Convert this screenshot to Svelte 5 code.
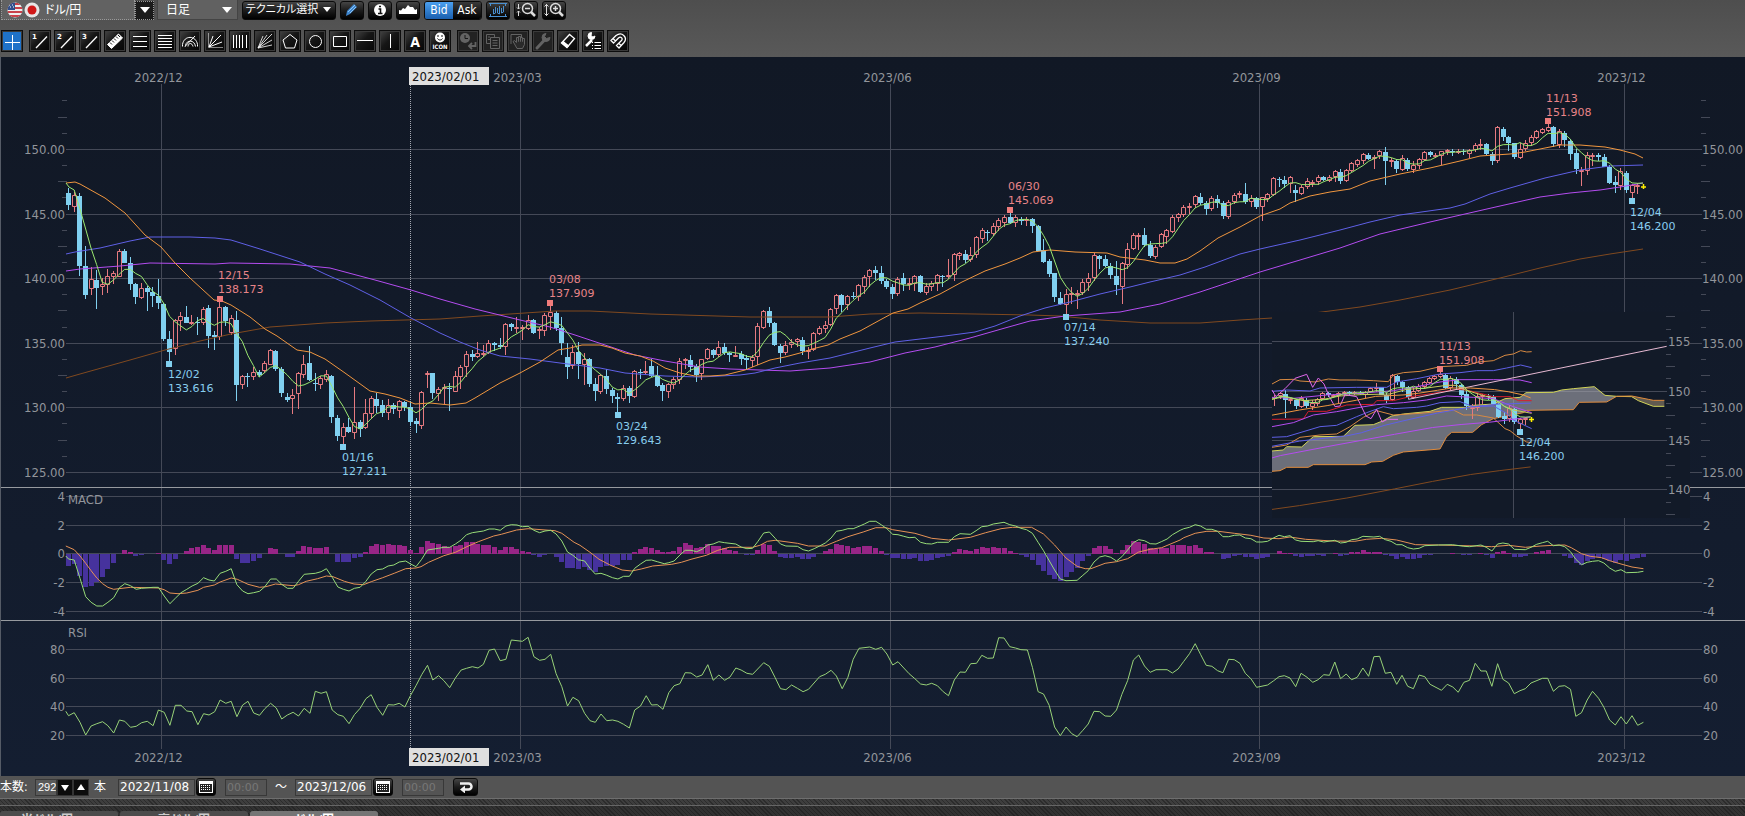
<script>
  // Candle rows: direction, body top, body bottom, high, low. Units are a third of
  // a chart pixel below the row block's base line.
  const blocks = [
    { base: 60, rows: `b 400 436 385 450|r 405 440 395 455|b 407 617 400 648|b 618 704 557 716|r 658 688 622 704|b 660 683 630 746|r 672 682 655 705|r 648 676 626 700|r 640 650 632 672|r 573 650 567 652|b 574 608 568 610|b 608 671 590 690|b 671 710 668 731|r 685 713 670 718|b 685 697 677 753|b 696 707 680 740|b 708 728 656 746|b 733 836 728 842|b 837 876 812 910|r 780 868 776 885|r 768 783 755 812|b 772 788 738 790|r 786 792 765 795|b 786 788 772 826|r 747 790 740 795|b 745 828 735 864|b 825 830 812 870|r 742 832 720 840|b 740 782 738 797|r 775 818 765 825|b 779 976 753 1022|r 948 976 944 986|b 947 952 938 980|r 935 950 922 960|b 935 946 930 950|r 908 934 903 938|r 870 914 867 916|b 873 926 870 932|b 926 1000 922 1010|b 1011 1019 1000 1025|r 1004 1018 987 1063|r 940 1003 935 1047|r 911 945 885 955|b 910 960 857 964|b 968 971 940 992|r 955 974 948 988|r 943 960 930 966|b 948 1070 945 1090|b 1074 1128 1065 1142|r 1100 1130 1088 1158|b 1102 1115 1075 1120|r 1085 1118 980 1138|b 1086 1106 1080 1132|r 1060 1105 1018 1108|r 1015 1063 1008 1078|b 1018 1037 1000 1060|b 1036 1060 1020 1070|r 1034 1060 1018 1080|b 1034 1048 1030 1062|r 1024 1054 1020 1075|b 1025 1042 1022 1052|b 1042 1085 1022 1097|b 1084 1093 1075 1118|r 996 1097 994 1108|r 940 946 932 985` },
    { base: 230, rows: `b 430 490 428 508|r 478 492 470 512|r 472 478 462 522|b 474 478 460 542|r 438 486 422 486|r 412 440 404 476|r 373 412 362 440|b 372 380 360 392|r 370 380 335 384|r 368 374 345 382|r 338 368 330 372|b 338 345 335 362|b 345 350 325 358|r 281 352 278 376|b 282 290 278 304|r 290 294 262 308|r 290 294 284 330|r 270 296 256 300|b 270 308 268 312|r 298 301 290 328|r 255 304 250 318|r 246 260 225 300|b 248 294 244 303|b 294 338 262 374|b 381 410 338 446|r 367 408 344 416|b 366 402 336 448|r 388 404 370 466|b 388 463 385 472|b 462 482 445 512|r 436 487 432 492|b 438 476 416 493|b 479 498 474 520|b 500 506 490 548|r 474 508 466 514|b 474 498 468 518|r 422 500 420 504|b 427 429 418 446|r 424 430 392 434|b 408 438 388 440|b 438 468 408 472|b 466 482 460 514|r 462 485 458 504|r 446 466 440 476|r 392 450 384 462|r 388 394 384 418|b 391 412 374 426|b 408 434 402 456|r 388 432 386 450|r 358 386 354 390|b 360 376 356 384|r 350 376 334 382|b 350 370 338 376|b 368 374 366 396|r 374 377 348 382|b 372 388 362 404|b 384 389 374 416|r 380 392 374 412|r 288 380 280 404|r 244 294 240 296|b 243 278 231 290|b 278 346 276 348|b 348 368 342 398|r 346 370 334 376|r 336 346 326 354|r 328 336 324 350|b 330 364 320 374|r 360 366 350 388|r 310 360 306 362|r 295 312 288 316|r 284 298 274 308|r 238 286 234 288|r 195 238 193 252|b 195 225 193 246|r 199 226 195 240|b 198 201 186 206|r 166 202 162 214` },
    { base: 130, rows: `r 442 470 436 493|r 420 442 416 470|b 421 430 408 450|b 430 454 408 462|b 452 472 446 478|b 471 491 462 506|r 446 492 440 498|b 445 462 430 484|r 458 466 444 480|r 437 462 434 484|b 439 487 436 490|r 468 488 460 494|r 460 470 452 484|r 436 462 432 484|b 438 442 434 472|r 434 438 386 446|r 372 436 368 452|r 370 378 366 390|b 371 390 360 400|r 374 390 352 396|r 322 376 318 384|r 300 326 294 340|b 307 310 300 332|r 287 312 280 318|r 270 290 264 302|r 260 280 254 290|b 262 278 248 282|r 262 280 256 292|b 266 272 262 284|r 268 274 262 288|b 267 288 264 308|b 287 362 284 364|b 360 396 328 398|b 392 432 388 440|b 430 502 428 516|b 504 522 486 526|r 492 524 478 560|r 490 496 472 522|r 490 494 480 536|r 456 490 446 496|r 443 460 430 484|r 374 444 368 454|b 378 388 374 416|b 388 408 376 412|b 408 436 400 448|b 437 464 394 494|r 400 470 396 522|r 356 406 340 418|r 316 358 310 360|r 314 320 308 360|b 316 346 293 350|b 345 378 332 384|r 350 380 346 386|r 313 350 310 354|r 300 320 296 342|r 260 306 256 308|r 253 263 248 276|r 230 254 226 262|r 228 231 220 252|r 199 226 196 234|b 202 218 190 224|b 220 236 212 256|r 204 236 198 244|b 206 218 196 234|b 218 258 214 268|r 216 262 210 266|r 195 216 190 222|r 190 196 184 204|b 192 216 158 222|r 204 216 194 232|b 204 230 200 236` },
    { base: 60, rows: `r 412 442 410 484|r 403 418 400 426|r 355 406 352 408|b 357 360 352 382|b 360 373 348 384|r 352 372 348 400|b 390 400 374 426|r 382 402 374 406|r 364 382 354 386|r 366 369 360 382|r 352 366 346 376|b 351 360 348 362|r 350 362 346 366|r 332 350 330 366|b 336 362 326 372|r 330 362 326 366|r 310 332 306 336|r 300 316 296 320|r 281 302 278 312|b 284 297 280 300|r 290 293 284 326|r 273 288 270 298|b 277 304 261 374|r 300 306 294 320|b 304 326 298 338|r 294 330 286 334|b 301 326 294 332|r 316 330 304 340|r 297 318 294 328|r 275 300 272 304|b 276 284 272 290|r 284 290 278 294|r 273 288 272 316|r 270 276 266 286|b 272 275 268 288|r 272 278 266 282|b 273 276 266 284|r 270 282 266 294|r 255 270 250 276|r 252 258 236 270|b 252 282 250 284|b 283 304 276 314|r 202 304 198 308|b 206 230 202 242|b 232 250 228 272|b 250 290 248 298|r 266 295 250 298|r 248 266 240 272|r 230 250 226 258|r 214 234 210 238|r 208 218 204 222|r 200 212 185 216|b 202 253 198 260|r 214 256 208 264|b 218 240 212 262|b 244 282 238 300|b 280 328 268 342|r 330 334 320 378|r 286 332 276 346|r 284 288 278 318|b 285 290 280 304|b 290 320 282 322|b 320 368 316 372|b 366 376 348 398|r 334 378 324 390|b 338 390 332 398|r 376 398 372 422|r 374 378 370 402` }
  ];
  const candles = blocks.flatMap(({ base, rows }) =>
    rows.split('|').map((row) => {
      const [dir, ...v] = row.split(' ');
      const [top, bottom, high, low] = v.map((n) => base + Number(n) / 3);
      return { up: dir === 'r', top, bottom, high, low, close: dir === 'r' ? top : bottom };
    })
  );
  const barX = (i) => 68.6 + i * 5.604;
  const insetX = (x) => 1440.3 + (x - 1548.1) * 0.9517;
  const insetY = (y) => 391.3 + (y - 149.3) * 0.7587;
  const same = (n) => n;

  function candlePaths(from, fx, fy) {
    let upBody = '', upWick = '', down = '';
    candles.forEach((c, i) => {
      if (i < from) return;
      const x = Math.floor(fx(barX(i)));
      const [t, b, h, l] = [c.top, c.bottom, c.high, c.low].map((n) => Math.round(fy(n)));
      const height = Math.max(1, b - t);
      if (c.up) {
        upBody += `M${x - 1.5} ${t + 0.5}h4v${Math.max(1, height - 1)}h-4z`;
        upWick += `M${x + 0.5} ${h}V${t}M${x + 0.5} ${b}V${Math.max(b, l)}`;
      } else {
        down += `M${x - 2} ${t}h5v${height}h-5zM${x} ${h}h1V${l}h-1z`;
      }
    });
    return { upBody, upWick, down };
  }
  const mainCandles = candlePaths(0, same, same);
  const insetCandles = candlePaths(233, insetX, insetY);

  const parse = (s) => s.trim().split(' ').map((p) => p.split(',').map(Number));
  const points = (list, fx = same, fy = same) => list.map(([x, y]) => `${fx(x).toFixed(1)},${fy(y).toFixed(1)}`).join(' ');

  const shortAvg = [[66, 183], [69, 187], [74.2, 190], [80, 209], [85.4, 228]];
  candles.forEach((c, i) => {
    if (i > 3) shortAvg.push([barX(i), candles.slice(i - 4, i + 1).reduce((s, k) => s + k.close, 0) / 5]);
  });
  shortAvg.push([1643, 183]);

  const averages = [
    { color: '#80491f', pts: parse('66,378 80,374 130,360 165,350 200,341 231,334 270,327 325,323 370,321 440,319 480,316 510,314 555,311 590,311 650,314 750,317 830,317 870,314 920,313 1030,315 1060,316 1100,320 1150,323 1200,323 1240,320 1272,318 1322,312 1360,307 1400,300 1450,290 1500,278 1540,268 1580,259 1610,254 1643,249') },
    { color: '#b44cf0', pts: parse('66,271 80,269 120,266 150,263 215,264 230,263 290,264 330,268 375,280 411,290 440,299 475,309 520,320 550,327 575,335 605,345 635,355 665,361 700,367 730,369 790,371 830,368 870,362 905,353 935,347 970,338 1005,328 1030,321 1065,316 1120,312 1160,304 1200,292 1260,272 1320,254 1340,248 1380,234 1430,222 1500,206 1540,197 1570,193 1600,190 1620,187 1643,183') },
    { color: '#5f60e6', pts: parse('66,254 75,252 100,248 130,241 150,237 190,237 215,238 231,240 260,249 300,262 325,274 350,285 380,300 411,318 440,333 460,342 480,350 500,356 530,359 560,363 600,368 625,373 665,376 700,377 740,375 755,373 775,368 800,363 830,358 870,348 895,342 920,339 945,336 975,332 995,326 1020,316 1045,308 1070,302 1100,294 1130,287 1150,282 1180,275 1205,267 1240,254 1260,249 1300,240 1340,230 1370,222 1400,215 1450,208 1465,204 1490,194 1510,188 1545,178 1580,170 1610,166 1643,165') },
    { color: '#f0963f', pts: parse('66,183 75,182 80,184 105,198 125,213 145,235 161,247 175,263 190,278 214,300 222,301 231,305 250,317 265,329 277,336 297,350 310,352 325,359 345,373 370,391 385,394 400,398 415,404 430,403 450,405 466,403 475,398 500,383 520,373 540,362 558,350 570,348 582,345 600,345 612,348 625,353 640,356 653,361 665,368 680,373 695,376 710,376 725,375 745,370 755,366 770,360 785,357 800,353 812,349 828,345 840,339 860,331 880,320 893,313 908,309 920,303 940,294 962,282 985,271 1005,264 1020,258 1033,252 1050,250 1075,252 1107,253 1120,257 1145,260 1160,263 1175,263 1187,259 1200,251 1218,238 1240,227 1260,216 1280,209 1290,203 1310,196 1330,192 1350,189 1370,181 1400,174 1430,168 1460,161 1480,156 1510,154 1525,152 1545,148 1560,145 1580,145 1605,147 1620,150 1635,154 1643,158') },
    { color: '#9be870', pts: shortAvg }
  ];

  // Oscillator traces come in three stretches, each with its own origin and step.
  const stretch = (parts) => {
    const origins = [[0, 2.613], [580, 2.613], [1150, 2.635]];
    return parts.flatMap((s, k) => parse(s).map(([x, y]) => [origins[k][0] + x / origins[k][1], 480 + y / 3]));
  };
  const macd = stretch([
    '172,228 179,237 194,240 209,295 224,350 238,367 253,378 268,378 282,367 297,353 312,323 326,311 341,317 356,328 370,325 400,322 414,322 429,348 444,371 458,355 473,338 488,328 502,318 517,310 532,293 546,300 560,303 575,280 590,274 604,266 619,314 634,333 648,341 663,338 678,334 692,320 707,297 722,297 736,313 751,325 766,325 780,304 795,283 824,280 839,275 853,266 868,292 883,321 897,328 912,333 926,325 941,322 956,304 970,282 985,269 1000,267 1014,258 1029,255 1043,246 1060,243 1073,252 1087,260 1102,238 1117,210 1146,205 1160,202 1175,202 1190,192 1205,180 1219,164 1234,158 1263,153 1278,147 1292,147 1307,151 1322,138 1336,134 1351,135 1365,140 1380,139 1395,151 1410,158 1424,153 1439,151 1453,162 1468,183 1483,216 1497,226 1512,240',
    '0,240 12,243 26,265 40,282 55,280 70,286 85,293 99,297 114,289 129,289 143,265 158,252 173,241 187,240 202,245 220,251 232,248 246,243 261,225 275,211 290,211 305,215 319,208 334,195 348,192 363,185 378,188 407,192 421,201 436,206 451,205 465,184 480,159 495,156 510,175 524,192 538,198 568,199 583,209 597,213 612,206 626,198 641,189 656,174 670,154 685,151 700,146 714,146 729,139 743,132 757,124 773,124 788,135 802,146 817,163 831,164 846,169 860,173 875,172 890,187 905,191 919,192 934,187 963,187 978,170 993,161 1020,163 1035,152 1050,140 1065,138 1080,132 1108,127 1123,134 1138,138 1152,145 1167,149 1182,160 1197,187 1211,212 1225,240 1240,270 1255,297 1270,302 1299,301 1314,286 1328,272 1343,246 1358,231 1372,227 1387,232 1402,243 1416,230 1431,210 1446,188 1460,179 1475,182 1490,191 1505,192 1519,185 1534,177 1548,164 1568,151',
    '89,146 104,142 119,134 133,138 148,148 163,148 178,154 192,170 207,170 222,166 237,165 251,174 266,176 281,186 295,186 310,184 325,174 340,166 354,170 369,167 384,180 398,184 430,185 443,182 458,186 487,181 502,189 517,187 531,179 546,177 561,169 590,171 605,169 620,179 635,184 650,194 664,194 679,203 694,207 709,205 724,197 760,195 797,194 827,199 842,200 872,195 886,202 901,213 916,192 930,189 945,192 960,208 989,209 1004,202 1019,193 1034,188 1048,184 1063,197 1078,195 1093,200 1108,215 1122,238 1137,254 1152,247 1166,244 1182,242 1196,249 1211,264 1226,274 1241,269 1255,278 1285,277 1300,274'
  ]);
  const signal = stretch([
    '172,198 194,209 209,228 224,250 238,272 253,294 268,311 282,322 297,328 341,322 414,324 429,329 444,339 465,341 488,339 517,331 532,322 560,315 575,306 604,294 620,298 648,313 678,322 695,320 720,312 766,317 780,314 800,304 830,296 853,288 870,290 900,304 925,312 950,314 970,305 1000,293 1030,280 1060,266 1087,264 1100,260 1120,247 1160,227 1190,217 1220,200 1250,185 1290,168 1310,163 1350,150 1380,146 1450,152 1468,160 1500,187',
    '0,196 26,217 50,238 80,256 110,270 135,273 160,267 190,258 240,253 265,247 290,238 330,226 360,211 390,202 451,202 470,196 490,184 510,181 568,190 597,198 640,198 670,184 700,170 740,156 773,143 800,143 817,149 875,160 919,175 963,180 1020,172 1060,158 1100,146 1130,142 1180,142 1211,162 1240,195 1270,234 1299,259 1320,266 1335,266 1372,250 1402,245 1431,236 1460,216 1490,208 1520,203 1568,180',
    '89,173 119,160 150,154 180,154 222,160 266,166 300,174 340,176 369,171 410,178 480,183 540,184 570,178 610,175 650,180 700,194 760,195 860,198 900,200 945,196 989,202 1030,198 1063,196 1093,195 1110,203 1137,221 1160,229 1190,233 1211,242 1241,252 1270,261 1300,266'
  ]);
  const rsi = stretch([
    '172,694 179,707 194,698 209,727 224,765 238,738 253,731 268,725 282,737 297,759 312,720 326,724 341,742 356,739 370,728 385,724 400,737 414,690 429,697 444,736 458,676 473,676 488,693 502,695 517,734 532,701 546,705 561,695 575,660 590,670 604,664 619,710 634,675 648,664 663,699 678,706 692,686 707,670 722,684 736,717 751,705 766,697 780,708 795,685 810,700 824,634 839,640 853,635 868,690 883,704 897,709 912,731 926,704 941,685 956,656 970,644 985,682 1000,706 1014,674 1029,675 1043,670 1058,681 1073,646 1087,617 1102,584 1117,556 1131,600 1146,587 1160,602 1175,623 1190,594 1205,570 1219,565 1234,560 1249,564 1263,553 1278,511 1292,507 1307,542 1322,538 1336,480 1365,484 1380,472 1395,530 1410,541 1424,538 1439,523 1453,581 1468,620 1483,678 1497,652 1512,662',
    '0,671 12,700 26,722 40,727 55,702 70,722 85,720 99,724 114,733 129,744 143,690 158,678 173,647 187,675 202,674 217,688 232,638 246,617 261,611 275,578 290,579 305,591 319,585 334,554 348,601 363,585 378,601 392,591 407,564 421,570 436,580 451,583 480,548 495,559 510,593 524,626 538,629 553,615 568,625 583,635 597,628 626,590 641,583 656,571 670,588 685,626 700,592 714,538 729,505 757,501 773,508 788,502 802,522 817,555 831,545 846,564 860,581 875,596 890,612 905,615 919,610 934,617 949,635 963,647 978,600 993,576 1007,577 1021,551 1036,550 1050,526 1065,535 1080,534 1094,473 1108,474 1123,500 1138,504 1152,509 1169,510 1182,562 1197,635 1211,642 1226,676 1240,741 1255,767 1270,741 1285,761 1299,770 1314,751 1328,732 1343,694 1358,695 1372,708 1387,709 1402,690 1416,643 1431,602 1446,540 1460,525 1475,558 1490,577 1505,569 1534,569 1548,579',
    '74,567 89,544 104,521 119,491 133,523 148,556 163,559 178,572 192,578 207,538 222,539 237,550 251,580 266,596 281,622 310,615 325,603 340,590 354,587 369,594 384,620 398,580 414,592 429,607 443,599 458,584 473,586 487,546 502,596 517,582 531,599 546,592 561,564 576,589 590,530 605,529 620,580 635,577 650,613 664,586 679,619 694,626 709,585 724,590 738,613 768,631 783,613 798,621 812,637 827,607 842,601 857,550 872,573 886,573 901,619 916,551 930,598 945,609 960,641 975,632 989,626 1004,609 1034,595 1048,595 1063,634 1078,619 1093,617 1108,628 1122,709 1137,698 1152,660 1166,634 1182,655 1196,682 1211,720 1226,735 1241,710 1255,732 1270,707 1285,736 1300,727'
  ]);
  const at = (line, x) => {
    const k = line.findIndex((p) => p[0] >= x);
    if (k < 1) return line[k < 0 ? line.length - 1 : 0][1];
    const [a, b] = [line[k - 1], line[k]];
    return a[1] + ((b[1] - a[1]) * (x - a[0])) / (b[0] - a[0] || 1);
  };
  const histogram = Array.from({ length: 282 }, (_, i) => {
    const x = barX(i);
    const d = Math.round(at(signal, x) - at(macd, x));
    return { x: Math.floor(x) - 2, d };
  }).filter((h) => h.d !== 0);

  const months = [[161.5, '2022/12'], [520.5, '2023/03'], [890.5, '2023/06'], [1259.5, '2023/09'], [1624.5, '2023/12']];
  const prices = [150, 145, 140, 135, 130, 125];
  const priceY = (p) => Math.round(149.4 + (150 - p) * 12.92 - 0.5) + 0.5;
  const ticks = Array.from({ length: 24 }, (_, k) => 153.75 - k * 1.25).filter((p) => p % 5 !== 0);
  const macdRows = [[496.5, '4'], [525.5, '2'], [553.5, '0'], [582.5, '-2'], [611.5, '-4']];
  const rsiRows = [[649.5, '80'], [678.5, '60'], [706.5, '40'], [735.5, '20']];
  const insetRows = [[341.5, '155'], [391.5, '150'], [440.5, '145'], [489.5, '140']];
  const insetTicks = [[316.5, 9], [329.5, 5], [354.5, 5], [366.5, 9], [378.5, 5], [403.5, 5], [415.5, 9], [428.5, 5], [453.5, 5], [465.5, 9], [477.5, 5], [502.5, 5], [514.5, 9]];

  const notes = [
    { hi: true, mx: 220, my: 299, x: 218, y: 279, d: '12/15', v: '138.173' },
    { hi: false, mx: 169, my: 364, x: 168, y: 378, d: '12/02', v: '133.616' },
    { hi: false, mx: 343, my: 447, x: 342, y: 461, d: '01/16', v: '127.211' },
    { hi: true, mx: 550, my: 303, x: 549, y: 283, d: '03/08', v: '137.909' },
    { hi: false, mx: 618, my: 415, x: 616, y: 430, d: '03/24', v: '129.643' },
    { hi: true, mx: 1010, my: 210, x: 1008, y: 190, d: '06/30', v: '145.069' },
    { hi: false, mx: 1066, my: 317, x: 1064, y: 331, d: '07/14', v: '137.240' },
    { hi: true, mx: 1548, my: 121, x: 1546, y: 102, d: '11/13', v: '151.908' },
    { hi: false, mx: 1632, my: 201, x: 1630, y: 216, d: '12/04', v: '146.200' }
  ];
  const insetNotes = [
    { hi: true, mx: 1440, my: 369, x: 1439, y: 350, d: '11/13', v: '151.908' },
    { hi: false, mx: 1520, my: 432, x: 1519, y: 446, d: '12/04', v: '146.200' }
  ];

  const cloudTop = '36,453 70,450 80,440 125,441 160,410 250,409 285,376 340,374 370,362 395,348 430,342 510,334 545,322 620,322 640,316 700,312 735,296 780,292 798,278 880,277 905,270 940,266 1003,260 1035,286';
  const cloudTopTail = '1070,289 1115,290 1135,302 1180,319 1213,319';
  const cloudBottom = '36,514 60,512 80,502 145,502 160,494 315,494 335,486 368,484 400,466 430,456 540,447 560,410 575,397 638,397 665,374 700,356 790,338 800,331 940,329 958,307 1040,306';
  const cloudBottomTail = '1070,289 1115,288 1165,298 1180,301 1213,301';
  const flip = (s) => s.split(' ').reverse().join(' ');
  const bands = [
    ['#d88a42', '36,252 60,239 100,238 120,243 165,246 205,237 240,240 290,240 340,242 385,245 400,225 430,218 480,214 540,200 620,196 655,186 700,182 735,166 760,162 782,152 800,156 815,155'],
    ['#5f60e6', '36,274 80,270 150,273 180,264 290,262 380,262 410,246 470,236 540,222 600,218 650,212 700,212 740,204 782,195 815,203'],
    ['#b44cf0', '36,292 100,295 200,285 300,280 400,272 460,262 540,246 600,239 700,239 780,240 815,248'],
    ['#d81e2c', '36,358 130,357 145,334 200,334 260,315 340,313 350,302 400,302 450,290 520,280 590,268 620,270 700,290 750,290 775,302 815,302'],
    ['#c8cc58', '36,298 70,290 130,302 190,298 240,288 300,284 390,282 440,268 500,264 560,256 590,256 610,268 700,296 735,320 760,330 815,340'],
    ['#b44cf0', '36,380 100,368 160,345 230,335 300,322 350,314 430,308 500,300 560,288 640,292 700,296 760,320 815,338'],
    ['#5f60e6', '36,412 80,410 120,398 180,380 230,376 290,350 320,338 370,320 400,326 470,322 500,318 540,308 600,305 640,320 700,318 740,340 760,360 815,386'],
    ['#d88a42', '36,442 80,435 120,412 180,405 230,402 270,380 310,352 350,332 400,345 480,340 540,334 580,330 610,345 650,345 700,354 735,386 750,392 770,408 800,426 815,428'],
    ['#e068ec', '36,270 48,290 75,266 105,235 140,223 158,262 175,234 192,252 208,290 225,320 240,318 255,284 290,290 318,348 333,356 350,328 366,366 382,358 414,358'],
    ['#e6b9d2', '445,298 1220,139']
  ];

  let pair = $state('ドル/円');
  let span = $state('日足');
  let count = $state('292');
  let dateFrom = $state('2022/11/08');
  let dateTo = $state('2023/12/06');
  let side = $state('Bid');

  const tools = [
    ['trend1', 'トレンド1'], ['trend2', 'トレンド2'], ['trend3', 'トレンド3'], ['ruler', '定規'], ['lines3', '平行線'], ['lines5', 'リトレースメント'],
    ['arcs', 'アーク'], ['fanaxis', 'ファン'], ['bars', 'タイムゾーン'], ['fan', 'ギャンファン'], ['penta', '五角形'], ['circle', '円'],
    ['rect', '四角形'], ['hline', '水平線'], ['vline', '垂直線'], ['letter', '文字'], ['smile', 'アイコン']
  ];
  const edits = [
    ['undo', '履歴', true], ['copy', 'コピー', true], ['hand', '移動', true], ['wrench', '設定', true],
    ['eraser', '消去', false], ['wrenchlist', '一覧設定', false], ['magnet', 'マグネット', false]
  ];
</script>

{#snippet icon(name)}
  <svg class="icon" viewBox="0 0 20 20" aria-hidden="true" fill="none" stroke="currentColor" stroke-width="1">
    {#if name === 'cross'}
      <path d="M10.5 4v15M3 11.5h15" />
    {:else if name.startsWith('trend')}
      <path d="M6 17 17 5.5" stroke-width="1.3" />
      <text x="2" y="8">{name.slice(5)}</text>
    {:else if name === 'ruler'}
      <path d="M2.5 13.5 13.5 3 17.5 7 6.5 17.5z" fill="currentColor" />
      <path d="M5 11.5l2 2M7 9.5l2 2M9 7.5l2 2M11 5.5l2 2M13 4l2 2" stroke="#111" />
    {:else if name === 'lines3'}
      <path d="M3 5.5h14M3 10.5h14M3 15.5h14" />
    {:else if name === 'lines5'}
      <path d="M3 4.5h14M3 7.5h14M3 10.5h14M3 13.5h14M3 16.5h14" />
    {:else if name === 'arcs'}
      <path d="M2.5 15.5v-2C4 4 16 4 17.5 13.5v2M5.5 15.5v-1c1-6 9-6 10 1M8 15.5c.5-4 4-4 5 0M5 15.5 15 5" />
    {:else if name === 'fanaxis'}
      <path d="M3.5 2v14.5H18" opacity=".5" /><path d="M4 16 8 5M4 16 16 4M4 16l13-5" />
    {:else if name === 'bars'}
      <path d="M3.5 4v13M6.5 4v13M9.5 4v13M12.5 4v13M16.5 4v13" />
    {:else if name === 'fan'}
      <path d="M3 17 8 5M3 17 12 4M3 17 17 3M3 17 17 9M3 17l14-3" stroke-width=".8" />
    {:else if name === 'penta'}
      <path d="M10 3.5 17 9l-2.5 8h-9L3 9z" />
    {:else if name === 'circle'}
      <circle cx="10.5" cy="10.5" r="6" />
    {:else if name === 'rect'}
      <path d="M3.5 5.5h13v10h-13z" />
    {:else if name === 'hline'}
      <path d="M2 9.5h16" />
    {:else if name === 'vline'}
      <path d="M10.5 3v14" />
    {:else if name === 'letter'}
      <text class="big" x="10" y="16" text-anchor="middle">A</text>
    {:else if name === 'smile'}
      <circle cx="10" cy="6.5" r="5" fill="currentColor" stroke="none" />
      <path d="M8 4v2M12 4v2M7.5 7.5c1 2 4 2 5 0" stroke="#111" />
      <text class="tiny" x="10" y="18" text-anchor="middle">ICON</text>
    {:else if name === 'undo'}
      <circle cx="7" cy="7" r="5" fill="currentColor" stroke="none" /><path d="M7 4v3.5h3" stroke="#181818" />
      <path d="M17.5 11v4h-6M14 12l-3 3 3 3" stroke-width="1.8" />
    {:else if name === 'copy'}
      <path d="M3.5 3.5h8v9h-8z" /><path d="M7.5 6.5h9v11h-9z" fill="#222" /><path d="M5 6h2M5 8.5h2M9.5 9.5h5M9.5 12h5M9.5 14.5h5" />
    {:else if name === 'hand'}
      <path d="M3 13V3.5h10.5V7" /><path d="M6.5 13 5 10.5l1.5-1 2 2V6.5h2v4V5.5h2v5-4h2v4-3h2v6l-2 4H9z" fill="#2a2a2a" />
    {:else if name === 'wrench'}
      <path d="M4 17 12 8.5" stroke-width="3" stroke-linecap="round" /><path d="M17 6.5a4 4 0 1 1-4-4l-1.5 3 2 2z" fill="currentColor" />
    {:else if name === 'eraser'}
      <path d="M3.5 12 11.5 3.5 16.5 7.5 9 16.5zM5 10.5l5.5 4.5" stroke-width="1.3" /><path d="M3.5 12 5 10.5l5.5 4.5L9 16.5z" fill="currentColor" />
    {:else if name === 'wrenchlist'}
      <path d="M9 9 3 15" stroke-width="2.5" /><path d="M12 5a3.5 3.5 0 1 1-3.5-3.5L8 5l2 1z" fill="currentColor" />
      <path d="M9 11.5h1M11.5 11.5H18M9 14.5h1M11.5 14.5H18M9 17.5h1M11.5 17.5H18" />
    {:else if name === 'magnet'}
      <path d="M3 9.5 8 4.5c6-4.5 12 2 8 7l-5 5.5-2.5-2.5 5-5c2-2-1-4.5-3-2.5l-5 5zM5 7.5l2.5 2.5M13.5 15 11 12.5" stroke-width="1.3" />
    {/if}
  </svg>
{/snippet}

{#snippet note(n)}
  <rect x={n.mx - 3} y={n.my - 3} width="6" height="6" fill={n.hi ? '#f07c7c' : '#82d0f0'} />
  <g class="note" fill={n.hi ? '#e88488' : '#88cdee'}>
    <text x={n.x} y={n.y}>{n.d}</text>
    <text x={n.x} y={n.y + 14}>{n.v}</text>
  </g>
{/snippet}

{#snippet candleSet(c)}
  <path d={c.upWick} stroke="#e67a80" fill="none" />
  <path d={c.upBody} stroke="#e67a80" fill="none" />
  <path d={c.down} fill="#80d0f0" />
{/snippet}

{#snippet calendar(label)}
  <button class="dark cal" aria-label={label}>
    <svg viewBox="0 0 14 12"><path d="M0 0h14v12H0z" fill="#fff" /><path d="M1 3h12v8H1z" fill="#222" /><path d="M2 4.5h10M2 6.5h10M2 8.5h10" stroke="#fff" stroke-dasharray="1 1" /></svg>
  </button>
{/snippet}

<div class="app">
  <header>
    <div class="row top">
      <div class="combo">
        <svg class="flags" viewBox="0 0 34 16" aria-hidden="true">
          <defs><clipPath id="us"><circle cx="8" cy="8" r="7.5" /></clipPath></defs>
          <g clip-path="url(#us)">
            <rect width="16" height="16" fill="#eee" />
            <path d="M0 2h16M0 6h16M0 10h16M0 14h16" stroke="#c9414a" stroke-width="2" />
            <rect width="8" height="8" fill="#31508e" />
            <path d="M2 3h1M5 3h1M3 5h1M6 5h1" stroke="#fff" />
          </g>
          <circle cx="25" cy="8" r="7.5" fill="#e6e6e6" /><circle cx="25" cy="8" r="4.5" fill="#d01818" />
        </svg>
        <select class="pair" aria-label="通貨ペア" bind:value={pair}><option>ドル/円</option></select>
      </div>
      <button class="drop" aria-label="通貨ペアを開く"><svg viewBox="0 0 10 6"><path d="M0 0h10L5 6z" fill="#fff" /></svg></button>
      <div class="span">
        <select aria-label="足種" bind:value={span}><option>日足</option></select>
        <svg viewBox="0 0 10 6" aria-hidden="true"><path d="M0 0h10L5 6z" fill="#fff" /></svg>
      </div>
      <button class="dark technical">テクニカル選択<svg viewBox="0 0 10 6"><path d="M1 0h8L5 5z" fill="#fff" /></svg></button>
      <button class="dark small" aria-label="描画">
        <svg viewBox="0 0 24 16"><path d="M7 9 14 2l3 3-7 7-4 2z" fill="#3e86cf" /><path d="M8 10l7-7M10 11l6-6" stroke="#8cc4f4" /></svg>
      </button>
      <button class="dark small" aria-label="情報">
        <svg viewBox="0 0 24 16"><circle cx="12" cy="8" r="6" fill="#fff" /><path d="M10.5 7H12.500v4.5M10 11.5h4.5M11 4.5h2" stroke="#111" stroke-width="1.6" fill="none" /></svg>
      </button>
      <button class="dark small" aria-label="チャート種類">
        <svg viewBox="0 0 24 16"><path d="M3 12V8l2 .5L7 6l2 1 3-4 2 2 3 0 2 3 2-1v5z" fill="#fff" /></svg>
      </button>
      <div class="sides">
        <button class:on={side === 'Bid'} onclick={() => (side = 'Bid')}>Bid</button>
        <button class:on={side === 'Ask'} onclick={() => (side = 'Ask')}>Ask</button>
      </div>
      <button class="dark small" aria-label="自動調整">
        <svg viewBox="0 0 24 16" fill="none" stroke="#4a90d0"><path d="M3 1.5h18M3 14.5h18M4.5 1.5V4M19.5 1.5V4M4.5 14.5V12M19.5 14.5V12M7.5 7v5l2-1V5M11.5 6v5l2 1V4M15.5 6v5l2-1V4" /></svg>
      </button>
      <button class="dark small" aria-label="縮小">
        <svg viewBox="0 0 24 16" fill="none" stroke="#ddd"><path d="M4.5 2v5M4.5 9v5M3 5.5 4.5 7 6 5.5M3 10.5 4.5 9 6 10.5" /><circle cx="13.5" cy="6.5" r="5" stroke-width="1.5" /><path d="M11 6.5h5" stroke-width="1.5" /><path d="m17 10 4 4" stroke-width="2.5" /></svg>
      </button>
      <button class="dark small" aria-label="拡大">
        <svg viewBox="0 0 24 16" fill="none" stroke="#ddd"><path d="M4.5 2v12M2.5 4.5l2-2 2 2M2.5 11.5l2 2 2-2" /><circle cx="13.5" cy="6.5" r="5" stroke-width="1.5" /><path d="M11 6.5h5M13.5 4v5" stroke-width="1.5" /><path d="m17 10 4 4" stroke-width="2.5" /></svg>
      </button>
    </div>
    <div class="row tools">
      <div class="group"><button class="tool active" aria-label="十字カーソル">{@render icon('cross')}</button></div>
      <div class="group">
        {#each tools as [name, label]}
          <button class="tool" aria-label={label}>{@render icon(name)}</button>
        {/each}
      </div>
      <div class="group">
        {#each edits as [name, label, off]}
          <button class="tool" aria-label={label} disabled={off}>{@render icon(name)}</button>
        {/each}
      </div>
    </div>
  </header>

  <main>
    <svg class="chart" viewBox="0 57 1745 719">
      <defs>
        <linearGradient id="sky" x1="0" y1="0" x2="0" y2="1"><stop offset="0" stop-color="#111825" /><stop offset="1" stop-color="#141e31" /></linearGradient>
        <clipPath id="inset"><rect x="1272" y="312" width="418" height="206" /></clipPath>
      </defs>
      <rect x="0" y="57" width="1745" height="719" fill="url(#sky)" />
      <path d="M.5 57v719" stroke="#555b66" />

      <g stroke="#444957" shape-rendering="crispEdges">
        {#each months as [x]}<path d="M{x} 84V749" />{/each}
        {#each prices as p}<path d="M66 {priceY(p)}H1702" />{/each}
        {#each ticks as p}
          <path d="M{p % 2.5 === 0 ? 58 : 62} {priceY(p)}H67M1701 {priceY(p)}h{p % 2.5 === 0 ? 9 : 5}" />
        {/each}
        {#each [...macdRows, ...rsiRows] as [y]}<path d="M66 {y}H1702" />{/each}
      </g>
      <path d="M1 487.5H1745M1 620.5H1745" stroke="#979a9f" />
      <path d="M410.5 85V748" stroke="#a4a8b2" stroke-dasharray="1 1" />

      <g class="axis">
        {#each months as [x, label]}
          <text x={x - 3} y="82" text-anchor="middle">{label}</text>
          <text x={x - 3} y="762" text-anchor="middle">{label}</text>
        {/each}
        {#each prices as p}
          <text x="65" y={priceY(p) + 4.5} text-anchor="end">{p.toFixed(2)}</text>
          <text x="1702" y={priceY(p) + 4.5}>{p.toFixed(2)}</text>
        {/each}
        {#each [...macdRows, ...rsiRows] as [y, label]}
          <text x="65" y={y + 4.5} text-anchor="end">{label}</text>
          <text x="1703" y={y + 4.5}>{label}</text>
        {/each}
        <text x="68" y="504">MACD</text>
        <text x="68" y="637">RSI</text>
      </g>

      {@render candleSet(mainCandles)}
      <g class="trace">
        {#each averages as a}<polyline points={points(a.pts)} stroke={a.color} />{/each}
      </g>
      {#each notes as n}{@render note(n)}{/each}
      <path d="M1641 187h5M1643.5 184v5" stroke="#ffee00" stroke-width="1.5" />

      <g shape-rendering="crispEdges">
        {#each histogram as h}
          <rect x={h.x} y={h.d > 0 ? 554 - h.d : 554} width="5" height={Math.abs(h.d)} fill={h.d > 0 ? '#972586' : '#46329d'} />
        {/each}
      </g>
      <g class="trace">
        <polyline points={points(signal)} stroke="#e69255" />
        <polyline points={points(macd)} stroke="#98dc78" />
        <polyline points={points(rsi)} stroke="#98d278" />
      </g>

      <rect x="1272" y="312" width="418" height="206" fill="#121a28" />
      <g stroke="#444957" shape-rendering="crispEdges">
        {#each insetRows as [y]}<path d="M1272 {y}H1667" />{/each}
        {#each insetTicks as [y, w]}<path d="M1666 {y}h{w}" />{/each}
        <path d="M1513.5 312V518" />
      </g>
      <g class="axis">
        {#each insetRows as [y, label]}<text x="1668" y={y + 4.5}>{label}</text>{/each}
      </g>
      <g class="thirds" transform="translate(1260 300) scale(.33333)">
        <polygon points="{cloudTop} 1070,289 {flip(cloudBottom)}" fill="#a9a9b0" fill-opacity=".6" />
        <polygon points="{cloudTopTail} {flip(cloudBottomTail)}" fill="#766a5a" fill-opacity=".8" />
        <polyline points="{cloudTop} {cloudTopTail}" stroke="#d2d458" fill="none" />
        <polyline points="{cloudBottom} {cloudBottomTail}" stroke="#e08b3c" fill="none" />
      </g>
      {@render candleSet(insetCandles)}
      <g class="thirds" transform="translate(1260 300) scale(.33333)">
        {#each bands as [color, pts]}<polyline points={pts} stroke={color} fill="none" />{/each}
      </g>
      <g class="trace" clip-path="url(#inset)">
        {#each averages as a}<polyline points={points(a.pts, insetX, insetY)} stroke={a.color} />{/each}
      </g>
      {#each insetNotes as n}{@render note(n)}{/each}
      <path d="M1529 419.5h5M1531.5 417v5" stroke="#ffee00" stroke-width="1.5" />

      {#each [67, 748] as y}
        <rect x="409" {y} width="80" height="18" fill="#dfdfdf" />
        <text class="picked" x="412" y={y + 14}>2023/02/01</text>
      {/each}
    </svg>
  </main>

  <footer>
    <div class="row range">
      <label for="count">本数:</label>
      <div class="spin">
        <input id="count" bind:value={count} />
        <button aria-label="減らす"><svg viewBox="0 0 8 7"><path d="M0 1h8L4 7z" fill="#fff" /></svg></button>
        <button aria-label="増やす"><svg viewBox="0 0 8 7"><path d="M0 6h8L4 0z" fill="#fff" /></svg></button>
      </div>
      <span class="unit">本</span>
      <div class="when">
        <input class="date" aria-label="開始日" bind:value={dateFrom} />{@render calendar('開始日を選ぶ')}
        <input class="time" aria-label="開始時刻" value="00:00" disabled />
      </div>
      <span class="tilde">～</span>
      <div class="when">
        <input class="date" aria-label="終了日" bind:value={dateTo} />{@render calendar('終了日を選ぶ')}
        <input class="time" aria-label="終了時刻" value="00:00" disabled />
      </div>
      <button class="dark back" aria-label="戻す">
        <svg viewBox="0 0 14 12" fill="none" stroke="#eee" stroke-width="2.5"><path d="M1 2.5h8.5a2.5 2.5 0 0 1 0 6H4" /><path d="M6 4.5v8L1 8.5z" fill="#eee" stroke="none" /></svg>
      </button>
    </div>
    <div class="strip"></div>
    <nav>
      <button>米ドル/円</button>
      <button>豪ドル/円</button>
      <button class="on">ドル/円</button>
    </nav>
  </footer>
</div>

<style>
  :global(body) { background: #555; overflow: hidden; }
  .app { display: flex; flex-direction: column; height: 100vh; overflow: hidden; background: #555; color: #fff; font: 12px/16px "DejaVu Sans Condensed", "Noto Sans CJK JP", sans-serif; }
  button, input, select { font: inherit; color: inherit; margin: 0; padding: 0; border: 0; background: none; box-sizing: border-box; border-radius: 0; }
  button { display: flex; align-items: center; justify-content: center; cursor: pointer; }
  header, footer { flex: none; }
  header { height: 57px; background: linear-gradient(#4e4e4e, #595959); }
  .row { display: flex; align-items: center; }
  .top { height: 20px; padding-left: 1px; gap: 4px; }
  .combo { display: flex; align-items: center; gap: 4px; width: 134px; height: 20px; padding-left: 5px; box-sizing: border-box; background: #626262; border: 1px dotted #999; border-top: 0; margin-right: -4px; }
  .flags { width: 34px; height: 16px; }
  select { appearance: none; outline: 0; font-feature-settings: "palt"; }
  .pair { flex: 1; height: 18px; }
  .drop { width: 19px; height: 19px; background: #1b1b1b; border: 1px dotted #999; }
  .drop svg, .span svg { width: 10px; height: 6px; }
  .span { display: flex; align-items: center; width: 81px; height: 20px; padding: 0 5px 0 8px; box-sizing: border-box; background: #616161; border: 1px solid #444; border-top: 0; margin-left: -1px; }
  .span select { flex: 1; height: 18px; }
  .dark { height: 19px; background: linear-gradient(#454545, #1c1c1c 50%, #000); border: 1px solid #0b0b0b; border-radius: 3px; }
  .technical { width: 94px; gap: 4px; font-size: 11px; font-feature-settings: "palt"; white-space: nowrap; }
  .technical svg { width: 10px; height: 6px; }
  .small { width: 24px; }
  .small svg { width: 24px; height: 16px; flex: none; }
  .sides { display: flex; border: 1px solid #0b0b0b; border-radius: 3px; height: 19px; box-sizing: border-box; overflow: hidden; }
  .sides button { width: 28px; background: linear-gradient(#3a3a3a, #000); }
  .sides .on { background: linear-gradient(#4ba0f0, #1a5fae); }
  .tools { padding: 10px 0 0 1px; gap: 6px; }
  .group { display: flex; gap: 3px; }
  .tool { width: 22px; height: 22px; border: 1px solid #0d0d0d; background: linear-gradient(135deg, #444, #161616 45%, #050505); box-shadow: inset 0 0 0 1px #3a3a3a; }
  .tool.active { background: #1f72c8; }
  .tool:disabled { color: #636363; background: #222; }
  .icon { width: 20px; height: 20px; flex: none; }
  .icon text { font: bold 7px "DejaVu Sans", sans-serif; fill: currentColor; stroke: none; }
  .icon .big { font: bold 14px "DejaVu Sans Condensed", sans-serif; }
  .icon .tiny { font: bold 6px "DejaVu Sans Condensed", sans-serif; }
  main { flex: none; }
  .chart { display: block; width: 100%; height: auto; }
  .axis text { font: 13px "DejaVu Sans Condensed", sans-serif; fill: #92959b; }
  .picked { font: 13px "DejaVu Sans Condensed", sans-serif; fill: #111; }
  .note { font: 11px "DejaVu Sans", sans-serif; }
  .trace { fill: none; }
  .thirds :is(polyline, polygon) { vector-effect: non-scaling-stroke; }
  .range { height: 22px; gap: 5px; background: #545454; border-bottom: 1px solid #6e6e6e; }
  .range label { width: 30px; white-space: nowrap; }
  .range input { height: 17px; border: 1px solid #383838; background: #5a5a5a; padding-left: 1px; }
  .spin { display: flex; }
  .spin input { width: 22px; font: 11px "Liberation Sans", sans-serif; padding-left: 2px; }
  .spin button { width: 16px; height: 17px; background: #0c0c0c; border: 1px solid #333; }
  .spin svg { width: 8px; height: 7px; }
  .unit { width: 19px; }
  .when { display: flex; align-items: center; }
  .range .date { width: 77px; font: 12px "DejaVu Sans", sans-serif; }
  .cal { width: 20px; margin: 0 9px 0 1px; height: 18px; }
  .cal svg, .back svg { width: 14px; height: 12px; flex: none; }
  .range .time { width: 42px; color: #777; font: 11px "DejaVu Sans", sans-serif; background: #545454; }
  .tilde { width: 18px; text-align: center; }
  .back { width: 25px; margin-left: 4px; height: 18px; }
  .strip { height: 6px; background: repeating-linear-gradient(45deg, #2c2c2c 0 1px, #3e3e3e 1px 3px); border-bottom: 1px solid #666; }
  nav { display: flex; gap: 2px; padding-top: 5px; background: repeating-linear-gradient(45deg, #262626 0 1px, #323232 1px 3px); }
  nav button { width: 128px; height: 18px; background: #4c4c4c; border-radius: 3px 3px 0 0; color: #ccc; font-weight: bold; }
  nav button:first-child { width: 118px; padding-right: 24px; }
  nav .on { background: #757575; color: #fff; }
</style>
